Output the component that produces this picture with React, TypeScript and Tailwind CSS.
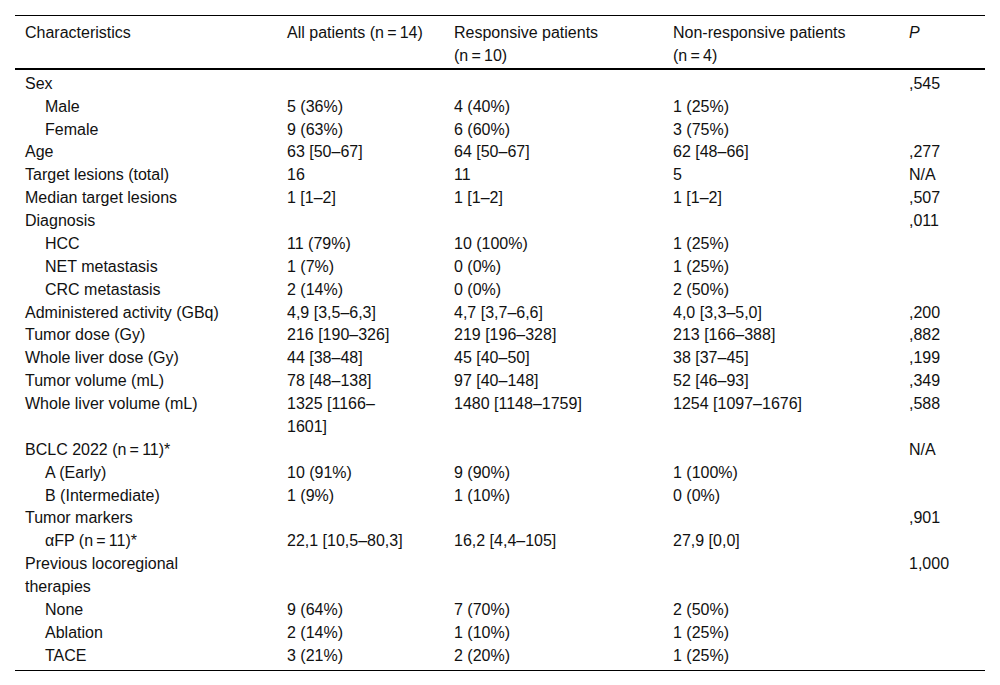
const cols = "grid grid-cols-[262px_167px_219px_236px_86px]";

// thin spaces around "=" as in the typeset source
const eq = "\u2009=\u2009";

type Row = {
  label: React.ReactNode;
  sub?: boolean;
  all?: React.ReactNode;
  resp?: React.ReactNode;
  non?: React.ReactNode;
  p?: string;
};

const rows: Row[] = [
  { label: "Sex", p: ",545" },
  { label: "Male", sub: true, all: "5 (36%)", resp: "4 (40%)", non: "1 (25%)" },
  { label: "Female", sub: true, all: "9 (63%)", resp: "6 (60%)", non: "3 (75%)" },
  { label: "Age", all: "63 [50–67]", resp: "64 [50–67]", non: "62 [48–66]", p: ",277" },
  { label: "Target lesions (total)", all: "16", resp: "11", non: "5", p: "N/A" },
  { label: "Median target lesions", all: "1 [1–2]", resp: "1 [1–2]", non: "1 [1–2]", p: ",507" },
  { label: "Diagnosis", p: ",011" },
  { label: "HCC", sub: true, all: "11 (79%)", resp: "10 (100%)", non: "1 (25%)" },
  { label: "NET metastasis", sub: true, all: "1 (7%)", resp: "0 (0%)", non: "1 (25%)" },
  { label: "CRC metastasis", sub: true, all: "2 (14%)", resp: "0 (0%)", non: "2 (50%)" },
  { label: "Administered activity (GBq)", all: "4,9 [3,5–6,3]", resp: "4,7 [3,7–6,6]", non: "4,0 [3,3–5,0]", p: ",200" },
  { label: "Tumor dose (Gy)", all: "216 [190–326]", resp: "219 [196–328]", non: "213 [166–388]", p: ",882" },
  { label: "Whole liver dose (Gy)", all: "44 [38–48]", resp: "45 [40–50]", non: "38 [37–45]", p: ",199" },
  { label: "Tumor volume (mL)", all: "78 [48–138]", resp: "97 [40–148]", non: "52 [46–93]", p: ",349" },
  {
    label: "Whole liver volume (mL)",
    all: (
      <>
        1325 [1166–
        <br />
        1601]
      </>
    ),
    resp: "1480 [1148–1759]",
    non: "1254 [1097–1676]",
    p: ",588",
  },
  { label: `BCLC 2022 (n${eq}11)*`, p: "N/A" },
  { label: "A (Early)", sub: true, all: "10 (91%)", resp: "9 (90%)", non: "1 (100%)" },
  { label: "B (Intermediate)", sub: true, all: "1 (9%)", resp: "1 (10%)", non: "0 (0%)" },
  { label: "Tumor markers", p: ",901" },
  { label: `αFP (n${eq}11)*`, sub: true, all: "22,1 [10,5–80,3]", resp: "16,2 [4,4–105]", non: "27,9 [0,0]" },
  {
    label: (
      <>
        Previous locoregional
        <br />
        therapies
      </>
    ),
    p: "1,000",
  },
  { label: "None", sub: true, all: "9 (64%)", resp: "7 (70%)", non: "2 (50%)" },
  { label: "Ablation", sub: true, all: "2 (14%)", resp: "1 (10%)", non: "1 (25%)" },
  { label: "TACE", sub: true, all: "3 (21%)", resp: "2 (20%)", non: "1 (25%)" },
];

export default function App() {
  return (
    <div
      className="min-h-screen bg-white px-[15px] pt-[15px] text-[16px] leading-[22.88px] text-[#111]"
      style={{ fontFamily: '"Liberation Sans", Arial, sans-serif' }}
    >
      <div className="w-[970px] border-t border-black">
        {/* Header */}
        <div className={`${cols} border-b-2 border-black pt-[6px]`}>
          <div className="pl-[10px]">Characteristics</div>
          <div className="pl-[10px]">All patients (n{eq}14)</div>
          <div className="pl-[10px]">
            Responsive patients
            <br />
            (n{eq}10)
          </div>
          <div className="pl-[10px]">
            Non-responsive patients
            <br />
            (n{eq}4)
          </div>
          <div className="pl-[10px] italic">P</div>
        </div>

        {/* Body */}
        <div className="border-b border-black pt-[3px] pb-[2px]">
          {rows.map((r, i) => (
            <div key={i} className={cols}>
              <div className={r.sub ? "pl-[30px]" : "pl-[10px]"}>{r.label}</div>
              <div className="pl-[10px]">{r.all}</div>
              <div className="pl-[10px]">{r.resp}</div>
              <div className="pl-[10px]">{r.non}</div>
              <div className="pl-[10px]">{r.p}</div>
            </div>
          ))}
        </div>
      </div>
    </div>
  );
}
